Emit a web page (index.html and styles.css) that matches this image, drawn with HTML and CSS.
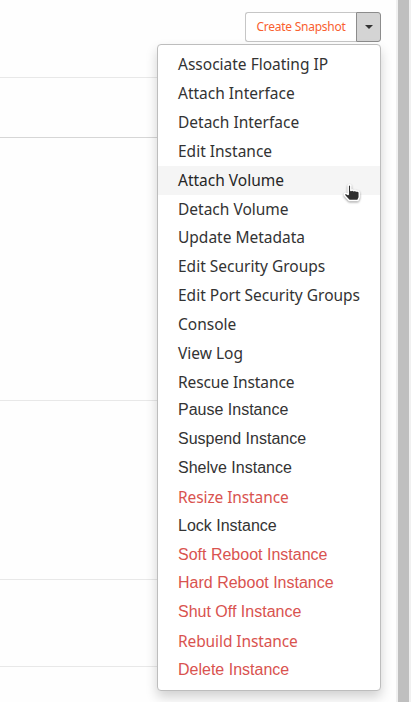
FILE: index.html
```html
<!DOCTYPE html>
<html lang="en">
<head>
<meta charset="utf-8">
<title>Instances</title>
<link rel="stylesheet" href="styles.css">
</head>
<body>
<div class="page">
  <main class="table">
    <div class="row row-actions">
      <div class="btn-group">
        <button class="btn" type="button">Create Snapshot</button>
        <button class="btn toggle" type="button" aria-label="Actions"><svg width="8" height="4" viewBox="0 0 8 4"><path d="M0 0h8L4 4z" fill="#333"/></svg></button>
        <ul class="menu">
          <li><span>Associate Floating IP</span></li>
          <li><span>Attach Interface</span></li>
          <li><span>Detach Interface</span></li>
          <li><span>Edit Instance</span></li>
          <li class="hover"><span>Attach Volume</span>
            <svg class="cursor" width="19" height="20" viewBox="0 0 19 20"><path d="M5.2 2.5Q6.5 .8 7.8 2.5V7.5Q9.5 6.5 10.6 7.7Q12.2 6.9 13.3 8.1Q16.3 7.6 16.3 10V14.2L14.8 17.6H6.2L1.6 12.6Q.8 10.8 2.6 10.2L5.2 11.5Z" fill="#303030" stroke="#fff" stroke-width="1.5" stroke-linejoin="round"/></svg>
          </li>
          <li><span>Detach Volume</span></li>
          <li class="snug"><span>Update Metadata</span></li>
          <li class="snug"><span>Edit Security Groups</span></li>
          <li class="snug"><span>Edit Port Security Groups</span></li>
          <li class="snug"><span>Console</span></li>
          <li><span>View Log</span></li>
          <li class="tight"><span>Rescue Instance</span></li>
          <li class="plain"><span>Pause Instance</span></li>
          <li class="plain"><span>Suspend Instance</span></li>
          <li class="plain"><span>Shelve Instance</span></li>
          <li class="danger snug"><span>Resize Instance</span></li>
          <li class="plain"><span>Lock Instance</span></li>
          <li class="plain danger loose"><span>Soft Reboot Instance</span></li>
          <li class="plain danger"><span>Hard Reboot Instance</span></li>
          <li class="plain danger"><span>Shut Off Instance</span></li>
          <li class="danger snug"><span>Rebuild Instance</span></li>
          <li class="plain danger"><span>Delete Instance</span></li>
        </ul>
      </div>
    </div>
    <div class="row row-footer"></div>
    <div class="row row-large"></div>
    <div class="row row-medium"></div>
    <div class="row row-small"></div>
  </main>
  <div class="scrollbar"></div>
</div>
</body>
</html>
```
FILE: styles.css
```css
* { box-sizing: border-box; }
body {
  margin: 0;
  background: #fefefe;
  font-family: "Noto Sans", sans-serif;
  overflow: hidden;
}
.page { display: flex; height: 702px; }
.table { width: 381px; margin-right: 15px; }
.row { border-bottom: 1px solid #e8e8e8; }
.row-actions { height: 78px; padding-top: 12px; }
.row-footer { height: 60px; border-color: #d6d6d6; }
.row-large { height: 263px; }
.row-medium { height: 179px; }
.row-small { height: 87px; }
.scrollbar {
  width: 15px;
  background: #bfbfbf;
  border: solid #f0f0f0;
  border-width: 0 2px;
}
.btn-group {
  position: relative;
  display: flex;
  width: 136px;
  height: 30px;
  margin-left: auto;
}
.btn {
  flex: 1;
  padding: 0;
  border: 1px solid #c6c6c6;
  border-right: 0;
  border-radius: 3px 0 0 3px;
  background: #fff;
  color: #f9602f;
  font: 12px/28px "Noto Sans", sans-serif;
  letter-spacing: -.25px;
  white-space: nowrap;
}
.toggle {
  display: flex;
  flex: 0 0 25px;
  align-items: center;
  justify-content: center;
  border: 1px solid #8c8c8c;
  border-radius: 0 3px 3px 0;
  background: #d4d4d4;
}
.menu {
  position: absolute;
  z-index: 1;
  top: 32px;
  right: 0;
  width: 224px;
  height: 647px;
  margin: 0;
  padding: 6px 0 5px;
  border: 1px solid #bdbdbd;
  border-radius: 4px;
  background: #fff;
  box-shadow: 0 6px 12px rgba(0, 0, 0, .18);
  list-style: none;
}
.menu li {
  position: relative;
  height: 28.85px;
  padding-left: 20px;
  color: #333;
  font-size: 15.5px;
  line-height: 28.6px;
  letter-spacing: 0;
  white-space: nowrap;
}
.menu li:nth-child(-n+4),
.menu .snug { line-height: 27px; }
.menu .tight { letter-spacing: -.1px; }
.menu .hover { background: #f5f5f5; color: #262626; }
.menu .plain {
  font-family: "Liberation Sans", sans-serif;
  font-size: 16px;
  line-height: 26.2px;
}
.menu .loose { line-height: 27.4px; }
.menu .danger { color: #d9534f; }
.menu .danger.snug { letter-spacing: -.1px; }
.cursor {
  position: absolute;
  z-index: 1;
  top: 17px;
  left: 185px;
  filter: drop-shadow(0 1px 1px rgba(0, 0, 0, .4));
}
```
